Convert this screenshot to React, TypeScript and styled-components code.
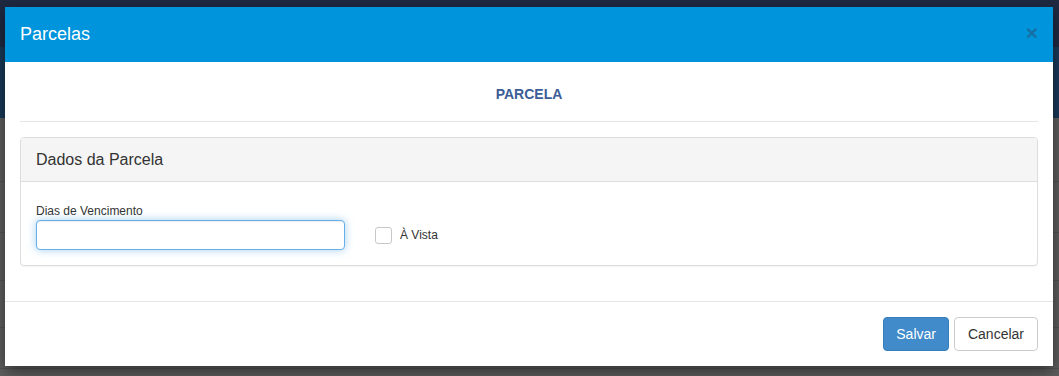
import React from 'react';
import styled, { createGlobalStyle } from 'styled-components';

const GlobalStyle = createGlobalStyle`
  html, body {
    margin: 0;
    padding: 0;
    background: #5f5f5f;
    font-family: "Liberation Sans", Arial, sans-serif;
  }
`;

// Página escurecida atrás do modal
const Page = styled.div`
  position: relative;
  width: 1059px;
  height: 376px;
  overflow: hidden;
  display: flex;
  flex-direction: column;
`;

const Navbar = styled.div`
  height: 47px;
  background: #1f2a43;
`;

const Band = styled.div`
  height: 71px;
  background: #193a5a;
`;

const BgRow = styled.div<{ $h: number }>`
  height: ${(p) => p.$h}px;
  border-bottom: 1px solid #545454;
  background: #5f5f5f;
`;

const Modal = styled.div`
  position: absolute;
  top: 7px;
  left: 5px;
  width: 1048px;
  background: #fff;
  box-shadow: 0 5px 15px rgba(0, 0, 0, 0.5);
  display: flex;
  flex-direction: column;
`;

const Header = styled.div`
  height: 55px;
  background: #0094dc;
  display: flex;
  align-items: center;
  justify-content: space-between;
  padding: 0 15px;
  box-sizing: border-box;
`;

const Title = styled.h4`
  margin: 0;
  font-size: 18px;
  font-weight: normal;
  color: #fff;
`;

const Close = styled.span`
  font-size: 21px;
  font-weight: bold;
  color: #1670a4;
  line-height: 1;
  margin-top: -4px;
`;

const Body = styled.div`
  padding: 15px 15px 35px;
`;

const Section = styled.h5`
  margin: 0 0 15px;
  height: 45px;
  box-sizing: border-box;
  padding-top: 9px;
  text-align: center;
  font-size: 14px;
  font-weight: bold;
  color: #3c5d97;
  border-bottom: 1px solid #e5e5e5;
`;

const Panel = styled.div`
  border: 1px solid #ddd;
  border-radius: 4px;
  box-shadow: 0 1px 1px rgba(0, 0, 0, 0.05);
`;

const PanelHeading = styled.div`
  height: 43px;
  background: #f5f5f5;
  border-bottom: 1px solid #ddd;
  border-radius: 3px 3px 0 0;
  display: flex;
  align-items: center;
  padding: 0 15px;
  font-size: 16px;
  color: #333;
`;

const PanelBody = styled.div`
  padding: 22px 15px 15px;
  display: flex;
  align-items: flex-end;
  gap: 30px;
`;

const Field = styled.div`
  display: flex;
  flex-direction: column;
`;

const Label = styled.label`
  font-size: 12px;
  color: #333;
  margin-bottom: 2px;
`;

const Input = styled.input`
  width: 309px;
  height: 30px;
  box-sizing: border-box;
  border: 1px solid #66afe9;
  border-radius: 4px;
  outline: none;
  box-shadow: inset 0 1px 1px rgba(0, 0, 0, 0.075), 0 0 8px rgba(102, 175, 233, 0.6);
  font-family: inherit;
  font-size: 12px;
  padding: 5px 10px;
`;

const Check = styled.label`
  display: flex;
  align-items: center;
  gap: 8px;
  font-size: 12px;
  color: #333;
  height: 30px;
`;

const Box = styled.span`
  width: 15px;
  height: 15px;
  border: 1px solid #c8c8c8;
  border-radius: 3px;
  background: #fff;
`;

const Footer = styled.div`
  border-top: 1px solid #e5e5e5;
  padding: 15px;
  display: flex;
  justify-content: flex-end;
  gap: 5px;
`;

const Button = styled.button<{ $primary?: boolean }>`
  height: 34px;
  padding: 0 ${(p) => (p.$primary ? 12 : 13)}px;
  font-family: inherit;
  font-size: 14px;
  border-radius: 4px;
  border: 1px solid ${(p) => (p.$primary ? '#357ebd' : '#ccc')};
  background: ${(p) => (p.$primary ? '#428bca' : '#fff')};
  color: ${(p) => (p.$primary ? '#fff' : '#333')};
`;

const App: React.FC = () => {
  return (
    <Page>
      <GlobalStyle />
      <Navbar />
      <Band />
      <BgRow $h={63} />
      <BgRow $h={50} />
      <BgRow $h={47} />
      <BgRow $h={46} />
      <BgRow $h={40} />

      <Modal>
        <Header>
          <Title>Parcelas</Title>
          <Close>×</Close>
        </Header>
        <Body>
          <Section>PARCELA</Section>
          <Panel>
            <PanelHeading>Dados da Parcela</PanelHeading>
            <PanelBody>
              <Field>
                <Label>Dias de Vencimento</Label>
                <Input />
              </Field>
              <Check>
                <Box />
                À Vista
              </Check>
            </PanelBody>
          </Panel>
        </Body>
        <Footer>
          <Button $primary>Salvar</Button>
          <Button>Cancelar</Button>
        </Footer>
      </Modal>
    </Page>
  );
};

export default App;
